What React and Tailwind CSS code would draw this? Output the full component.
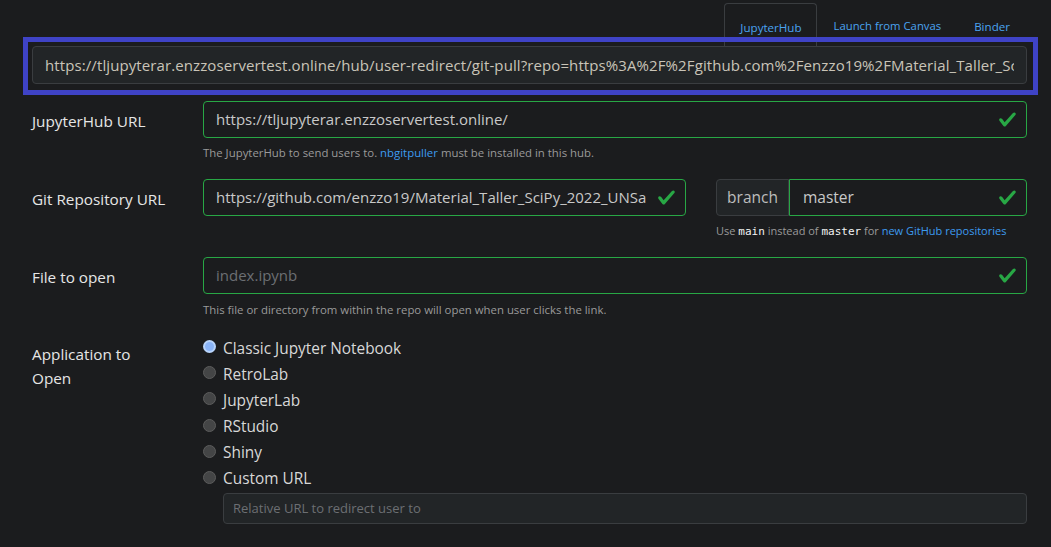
import React from 'react';

const font = { fontFamily: '"Open Sans", "Noto Sans", sans-serif' };
const mono = { fontFamily: '"DejaVu Sans Mono", monospace' };

const ValidIcon = () => (
  <svg viewBox="0 0 8 8" className="w-[19px] h-[19px] shrink-0" fill="#28a745">
    <path d="M2.3 6.73L.6 4.53c-.4-1.04.46-1.4 1.1-.8l1.1 1.4 3.4-3.8c.6-.63 1.6-.27 1.2.7l-4 4.6c-.43.5-.8.4-1.1.1z" />
  </svg>
);

const ValidInput = ({ value, placeholder, className = '' }) => (
  <div className={`flex items-center h-[37px] border border-[#28a745] rounded-[4px] pl-[12px] pr-[9px] bg-[#1b1c1e] ${className}`}>
    <div className={`flex-1 overflow-hidden whitespace-nowrap text-[15px] mr-[10px] ${value ? 'text-[#c9c9c9]' : 'text-[#6c6f73]'}`}>
      {value || placeholder}
    </div>
    <ValidIcon />
  </div>
);

const Help = ({ children, className = '' }) => (
  <p className={`text-[11.4px] leading-[16px] text-[#9a9a9a] ${className}`}>{children}</p>
);

const Label = ({ children }) => (
  <div className="w-[171px] h-[37px] pt-[3px] flex items-center text-[15.3px] text-[#e6e6e6]">{children}</div>
);

const Radio = ({ label, checked }) => (
  <label className="flex items-center h-[26.2px]">
    {checked ? (
      <span className="w-[13px] h-[13px] rounded-full border-[2px] border-[#b8d4fb] bg-[#8ab4f8] mr-[7px] -mt-[3px]" />
    ) : (
      <span className="w-[13px] h-[13px] rounded-full border border-[#5c5c5c] bg-[#444546] mr-[7px] -mt-[3px]" />
    )}
    <span className="text-[15.4px] text-[#d8d8d8]">{label}</span>
  </label>
);

export default function App() {
  return (
    <div className="w-[1051px] h-[547px] bg-[#1b1c1e] overflow-hidden" style={font}>
      <div className="pl-[32px] pr-[24px]">
        {/* Tabs */}
        <div className="flex justify-end items-end h-[46px]">
          <div className="h-[43px] pl-[15px] pr-[14px] pt-[15px] border border-b-0 border-[#3a3d40] rounded-t-[4px] text-[11.6px] text-[#4aa3f0]">JupyterHub</div>
          <div className="h-[43px] pl-[17px] pr-[16px] pt-[15px] text-[11.3px] text-[#4aa3f0]">Launch from Canvas</div>
          <div className="h-[43px] pl-[17px] pr-[17px] pt-[15px] text-[11.6px] text-[#4aa3f0]">Binder</div>
        </div>

        {/* Generated link */}
        <div className="relative">
          <div className="h-[38px] flex items-center bg-[#222527] border border-[#3a3d40] rounded-[4px] px-[12px]">
            <div className="overflow-hidden whitespace-nowrap text-[15px] tracking-[0.1px] text-[#c9c4b8]">
              https://tljupyterar.enzzoservertest.online/hub/user-redirect/git-pull?repo=https%3A%2F%2Fgithub.com%2Fenzzo19%2FMaterial_Taller_SciPy_2022_UNSa&urlpath=tree%2FMaterial_Taller_SciPy_2022_UNSa%2Findex.ipynb&branch=master
            </div>
          </div>
          <div className="absolute -left-[9px] -top-[9px] -right-[11px] -bottom-[11px] border-[5px] border-[#3f43c6] pointer-events-none" />
        </div>

        {/* JupyterHub URL */}
        <div className="flex mt-[17px]">
          <Label>JupyterHub URL</Label>
          <div className="flex-1">
            <ValidInput value="https://tljupyterar.enzzoservertest.online/" />
            <Help className="mt-[7px]">
              The JupyterHub to send users to. <span className="text-[#3d9bf0]">nbgitpuller</span> must be installed in this hub.
            </Help>
          </div>
        </div>

        {/* Git repo */}
        <div className="flex mt-[18px]">
          <Label>Git Repository URL</Label>
          <div className="flex-1 flex gap-[30px]">
            <ValidInput className="w-[483px]" value="https://github.com/enzzo19/Material_Taller_SciPy_2022_UNSa" />
            <div className="flex-1">
              <div className="flex h-[37px]">
                <div className="w-[73px] flex items-center justify-center bg-[#222527] border border-[#3a3d40] rounded-l-[4px] text-[15.5px] text-[#bdbdbd]">branch</div>
                <div className="flex-1 flex items-center border border-[#28a745] rounded-r-[4px] pl-[13px] pr-[9px]">
                  <div className="flex-1 text-[15.5px] text-[#c9c9c9]">master</div>
                  <ValidIcon />
                </div>
              </div>
              <p className="mt-[7px] text-[11px] leading-[16px] text-[#9a9a9a]">
                Use <code className="text-[#f4f4f4] text-[11px]" style={mono}>main</code> instead of{' '}
                <code className="text-[#f4f4f4] text-[11px]" style={mono}>master</code> for{' '}
                <span className="text-[#3d9bf0]">new GitHub repositories</span>
              </p>
            </div>
          </div>
        </div>

        {/* File to open */}
        <div className="flex mt-[17px]">
          <Label>File to open</Label>
          <div className="flex-1">
            <ValidInput placeholder="index.ipynb" />
            <Help className="mt-[8px]">This file or directory from within the repo will open when user clicks the link.</Help>
          </div>
        </div>

        {/* Application */}
        <div className="flex mt-[17px]">
          <div className="w-[171px] pr-[40px] pt-[7px] text-[15.3px] leading-[24px] text-[#e6e6e6]">Application to Open</div>
          <div className="flex-1">
            <Radio label="Classic Jupyter Notebook" checked />
            <Radio label="RetroLab" />
            <Radio label="JupyterLab" />
            <Radio label="RStudio" />
            <Radio label="Shiny" />
            <Radio label="Custom URL" />
            <div className="ml-[20px] mt-[1px] h-[31px] flex items-center bg-[#222527] border border-[#3a3d40] rounded-[4px] px-[9px] text-[13px] text-[#6c6f73]">
              Relative URL to redirect user to
            </div>
          </div>
        </div>
      </div>
    </div>
  );
}
